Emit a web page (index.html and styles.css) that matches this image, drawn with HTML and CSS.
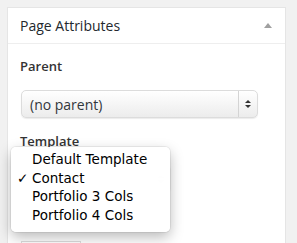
FILE: index.html
```html
<!DOCTYPE html>
<html>
<head>
<meta charset="utf-8">
<link rel="stylesheet" href="styles.css">
</head>
<body>
<div class="postbox">
  <div class="hndle">
    <span class="title">Page Attributes</span>
    <span class="toggle"></span>
  </div>
  <div class="inside">
    <div class="label">Parent</div>
    <div class="select wide">
      <span class="value">(no parent)</span>
      <span class="arrows"><i class="up"></i><i class="down"></i></span>
    </div>
    <div class="label">Template</div>
    <div class="select narrow">
      <span class="value covered">Contact</span>
      <span class="arrows"><i class="up"></i><i class="down"></i></span>
    </div>
    <div class="label covered">Order</div>
    <div class="order-input"></div>
  </div>
  <ul class="menu">
    <li>Default Template</li>
    <li class="checked"><span class="check">✓</span>Contact</li>
    <li>Portfolio 3 Cols</li>
    <li>Portfolio 4 Cols</li>
  </ul>
</div>
</body>
</html>
```
FILE: styles.css
```css
html, body {
  margin: 0;
  padding: 0;
  background: #f1f1f1;
  height: 243px;
  overflow: hidden;
}
body {
  padding: 7px 11px 0 7px;
  font-family: "Open Sans", "Liberation Sans", sans-serif;
  color: #23282d;
}
.postbox {
  position: relative;
  background: #fff;
  border: 1px solid #e5e5e5;
  height: 300px;
}
.hndle {
  height: 35px;
  border-bottom: 1px solid #eeeeee;
  display: flex;
  align-items: center;
  justify-content: space-between;
  padding: 0 13px 0 12px;
}
.title {
  font-size: 14px;
  line-height: 1;
}
.toggle {
  width: 0;
  height: 0;
  border-left: 4px solid transparent;
  border-right: 4px solid transparent;
  border-bottom: 5px solid #a0a0a0;
}
.inside {
  padding: 13px 12px 0 12px;
}
.label {
  font-size: 13px;
  font-weight: 600;
  line-height: 18px;
  color: #333;
}
.select {
  margin: 15px 0 14px 1px;
  height: 26px;
  border: 1px solid #dcdcdc;
  border-radius: 5px;
  background: linear-gradient(#ffffff, #ececec);
  box-shadow: 0 1px 1px rgba(0,0,0,0.08);
  display: flex;
  align-items: center;
  box-sizing: content-box;
}
.select.wide { width: 235px; }
.select.narrow { width: 148px; opacity: 0.25; }
.value {
  flex: 1;
  font-size: 14px;
  padding-left: 8px;
  color: #32373c;
}
.covered { visibility: hidden; }
.arrows {
  width: 18px;
  align-self: stretch;
  border-left: 1px solid #d4d4d4;
  display: flex;
  flex-direction: column;
  align-items: center;
  justify-content: center;
  gap: 2px;
}
.arrows i {
  width: 0;
  height: 0;
  border-left: 3px solid transparent;
  border-right: 3px solid transparent;
}
.arrows .up { border-bottom: 3.5px solid #333; }
.arrows .down { border-top: 3.5px solid #333; }
.order-input {
  margin: 16px 0 0 1px;
  width: 58px;
  height: 24px;
  border: 1px solid #ddd;
}
.menu {
  position: absolute;
  left: 3px;
  top: 139px;
  width: 159px;
  height: 85px;
  margin: 0;
  padding: 3px 0 0 0;
  box-sizing: border-box;
  list-style: none;
  background: rgba(255,255,255,0.97);
  border-radius: 5px;
  box-shadow: 0 0 0 1px rgba(0,0,0,0.06), 0 5px 14px rgba(0,0,0,0.28);
  font-family: "DejaVu Sans", sans-serif;
  font-size: 13.5px;
  color: #000;
}
.menu li {
  position: relative;
  line-height: 18.7px;
  padding-left: 21px;
  white-space: nowrap;
}
.check {
  position: absolute;
  left: 6px;
  top: 0;
}
```
